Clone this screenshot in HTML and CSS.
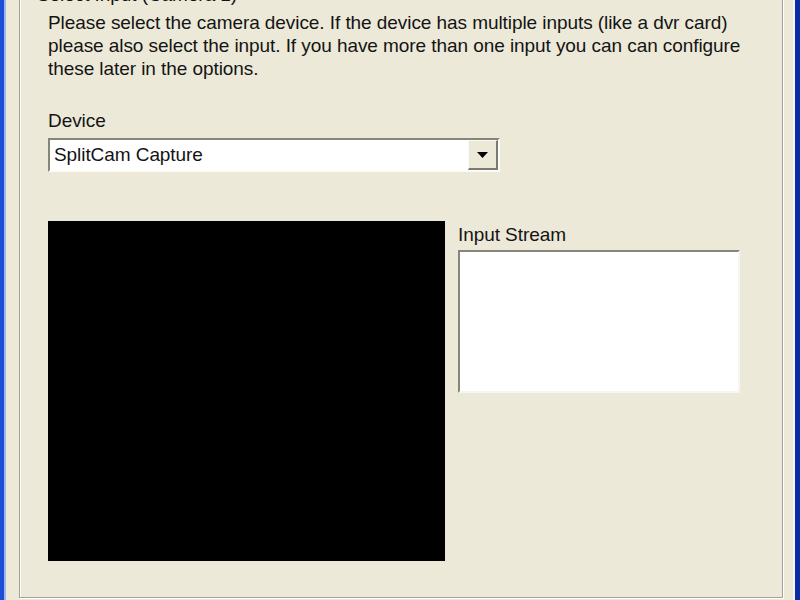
FILE: index.html
```html
<!DOCTYPE html>
<html lang="en">
<head>
<meta charset="UTF-8">
<title>Select Input</title>
<link rel="stylesheet" href="styles.css">
</head>
<body>
<div class="window">
    <fieldset class="group">
        <legend>Select Input (Camera 1)</legend>
        <p class="intro">Please select the camera device. If the device has multiple inputs (like a dvr card) please also select the input. If you have more than one input you can can configure these later in the options.</p>

        <div class="field-label device-label">Device</div>
        <div class="combo">
            <span class="combo-value">SplitCam Capture</span>
            <span class="combo-btn">
                <svg width="11" height="6" viewBox="0 0 11 6"><path d="M0 0h11L5.5 6z" fill="#000"/></svg>
            </span>
        </div>

        <div class="capture">
            <div class="preview"></div>
            <div class="stream">
                <div class="field-label">Input Stream</div>
                <div class="stream-box"></div>
            </div>
        </div>
    </fieldset>
</div>
</body>
</html>
```

FILE: styles.css
```css
* {
    margin: 0;
    padding: 0;
    box-sizing: border-box;
}
body {
    width: 800px;
    height: 600px;
    overflow: hidden;
    background: #ece9d8;
    font-family: "Liberation Sans", Arial, sans-serif;
    font-size: 19px;
    line-height: 23px;
    letter-spacing: -0.07px;
    color: #141414;
}
.window {
    height: 600px;
    background: #ece9d8;
    border-left: 4px solid #1d4ed6;
    border-right: 5px solid #0b2ca4;
    box-shadow: inset 2px 0 0 #9fb6ee, inset -2px 0 0 #f6f6f0;
    padding: 0 12px 0 15px;
    overflow: hidden;
}
.group {
    margin-top: -17px;
    border: 1px solid #a2a292;
    box-shadow: 1px 1px 0 #fff, inset 1px 1px 0 #fff;
    padding: 5px 10px 36px 28px;
    min-width: 0;
}
.group legend {
    margin-left: -13px;
    padding: 0 2px;
    line-height: 23px;
}
.intro {
    width: 700px;
}
.device-label {
    margin-top: 29px;
}
.combo {
    display: flex;
    width: 452px;
    height: 34px;
    margin-top: 6px;
    background: #fff;
    border-style: solid;
    border-width: 2px;
    border-color: #858578 #fbfbf8 #fbfbf8 #858578;
}
.combo-value {
    flex: 1;
    padding-left: 4px;
    line-height: 30px;
}
.combo-btn {
    width: 30px;
    display: flex;
    align-items: center;
    justify-content: center;
    background: #ece9d8;
    border-style: solid;
    border-width: 1px 2px 2px 1px;
    border-color: #fbfbf6 #7a7a70 #7a7a70 #fbfbf6;
}
.capture {
    display: flex;
    gap: 13px;
    margin-top: 49px;
}
.preview {
    width: 397px;
    height: 340px;
    background: #000;
}
.stream {
    padding-top: 2px;
}
.stream-box {
    width: 282px;
    height: 143px;
    margin-top: 4px;
    background: #fff;
    border-style: solid;
    border-width: 2px;
    border-color: #858578 #f7f7ef #f7f7ef #858578;
}
```
